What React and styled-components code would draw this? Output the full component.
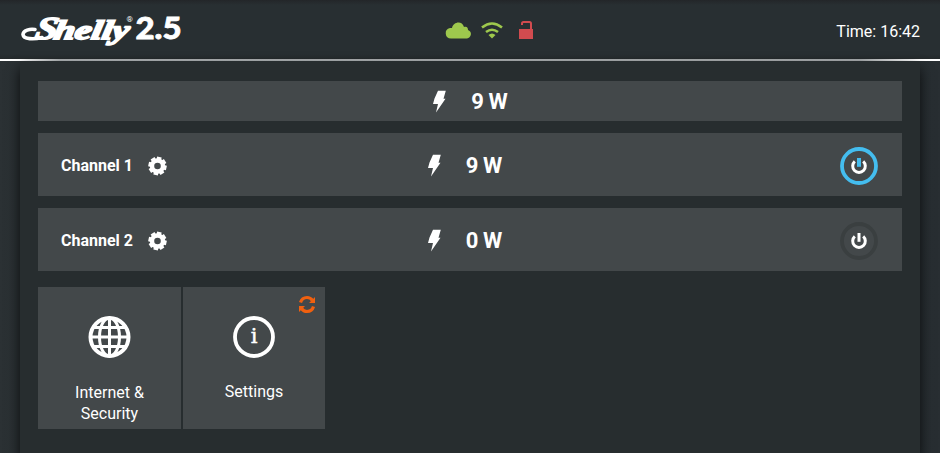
import React from "react";
import styled, { createGlobalStyle } from "styled-components";

const Global = createGlobalStyle`
  * { box-sizing: border-box; }
  body { margin: 0; background: #282e31; color: #fff; font: 16px/21px Roboto, sans-serif; overflow: hidden; }
`;
const Page = styled.div`
  height: 453px;
  overflow: hidden;
  background: linear-gradient(90deg, #2b3134, #262d30 8%, #262d30 92%, #282e32);
`;
const Header = styled.header`
  height: 59px;
  display: grid;
  grid-template-columns: 425px 90px 1fr;
  align-items: center;
  padding: 0 20px;
  background: linear-gradient(#232629, #282f32 5px, #282f32 54px, #24292b);
`;
const Logo = styled.svg`
  display: block;
  width: 170px;
  height: 59px;
`;
const StatusIcons = styled.div`
  display: flex;
  align-items: center;
  height: 59px;
  svg { display: block; flex: none; }
`;
const Clock = styled.div`
  text-align: right;
  padding-top: 4px;
`;
const Rule = styled.div`
  height: 2px;
  background: linear-gradient(90deg, #fff 0, #fff 20px, #aaaeb0 60px, #a4a8aa 860px, #fff 920px);
`;
const Panel = styled.main`
  margin: 0 20px;
  height: 392px;
  padding: 20px 18px;
  background: #272d2f;
  box-shadow: 0 8px 12px rgba(0, 0, 0, 0.75);
`;
const Row = styled.section`
  display: grid;
  grid-template-columns: 1fr auto 1fr;
  align-items: center;
  height: ${(p) => p.$height}px;
  margin-bottom: 12px;
  padding: 0 24px 0 23px;
  background: #43484a;
`;
const Name = styled.div`
  display: flex;
  align-items: center;
  gap: 15px;
  font-weight: 700;
  padding-top: 2px;
`;
const Power = styled.div`
  display: flex;
  align-items: center;
  gap: 25px;
  padding-right: ${(p) => p.$shift * 2}px;
  padding-top: ${(p) => (p.$shift ? 2 : 0)}px;
  font-size: 22px;
  font-weight: 700;
  word-spacing: -1px;
  svg { display: block; }
`;
const Toggle = styled.button`
  justify-self: end;
  width: 38px;
  height: 38px;
  margin-top: 3px;
  padding: 0;
  border: 0;
  background: none;
  svg { display: block; }
`;
const Tiles = styled.div`
  display: flex;
  gap: 2px;
  margin-top: 16px;
`;
const Tile = styled.section`
  position: relative;
  display: flex;
  flex-direction: column;
  align-items: center;
  width: ${(p) => p.$width}px;
  height: 142px;
  padding-top: 28px;
  background: #43484a;
  text-align: center;
`;
const TileLabel = styled.div`
  width: 100px;
  margin-top: ${(p) => p.$gap}px;
`;
const Badge = styled.svg`
  position: absolute;
  top: 8px;
  right: 9px;
`;

const Bolt = () => (
  <svg width="15" height="23" viewBox="0 0 15 23" fill="#fff">
    <path d="M7 .8H14.800L12.500 8.800h2L5 22.500 7 14H2L3.500 8.500z" />
  </svg>
);
const teeth = [0, 45, 90, 135, 180, 225, 270, 315];
const Gear = () => (
  <svg width="20" height="20" viewBox="0.500 0 20 20">
    <circle cx="10" cy="10" r="5.500" fill="none" stroke="#fff" strokeWidth="4.400" />
    {teeth.map((a) => (
      <rect key={a} x="7.700" y=".9" width="4.600" height="4" fill="#fff" transform={`rotate(${a + 12} 10 10)`} />
    ))}
  </svg>
);
const PowerButton = ({ on }) => (
  <Toggle aria-label="Power">
    <svg width="38" height="38" viewBox="0 0 38 38" fill="none">
      <circle cx="19" cy="19" r="17" stroke={on ? "#44bdef" : "#3a3f40"} strokeWidth="3.8" />
      <path d="M14.800 14.400a6.300 6.300 0 1 0 8.400 0" stroke="#fff" strokeWidth="3" />
      <path d="M19 11v8.800" stroke={on ? "#44bdef" : "#fff"} strokeWidth={on ? 4 : 3} />
    </svg>
  </Toggle>
);
const Reading = ({ value, shift = 0 }) => (
  <Power $shift={shift}><Bolt /><span>{value} W</span></Power>
);
const Channel = ({ name, value, on }) => (
  <Row $height={63}>
    <Name>{name}<Gear /></Name>
    <Reading value={value} shift={5.5} />
    <PowerButton on={on} />
  </Row>
);

export default function App() {
  return (
    <Page>
      <Global />
      <Header>
        <Logo viewBox="20 0 170 59" fill="#fff">
          <g fontFamily="Liberation Serif, serif" fontStyle="italic" fontWeight="700" stroke="#fff">
            <text transform="translate(34 38.500) skewX(-12)" fontSize="32" strokeWidth="1.600" textLength="22" lengthAdjust="spacingAndGlyphs">S</text>
            <text transform="translate(53 39) skewX(-10)" fontSize="27" strokeWidth="1.800" textLength="75" lengthAdjust="spacingAndGlyphs">helly</text>
          </g>
          <path d="M42 37.500C34 39.500 23.500 39.500 23 34.500C23 30.500 30 28.500 35 29.500" fill="none" stroke="#fff" strokeWidth="3.600" strokeLinecap="round" />
          <text x="126.500" y="22" fontFamily="Roboto, sans-serif" fontSize="8">®</text>
          <text x="135.500" y="39" fontFamily="Lato, sans-serif" fontWeight="900" fontSize="31" stroke="#fff" strokeWidth=".8" textLength="46" lengthAdjust="spacingAndGlyphs">2.5</text>
        </Logo>
        <StatusIcons>
          <svg width="90" height="24" viewBox="445 18 90 24">
            <path d="M451 38.500a5.300 5.300 0 0 1-1-10.500h2c1-6 10-8 12-1 3-1 4 1 4 3 5 2 3 8-1 8.500z" fill="#9ec84d" />
            <path d="M482 27.500q10-8 20 0M486 32q6-4.500 12 0" fill="none" stroke="#9ec84d" strokeWidth="2.600" />
            <path d="M488.500 35q3.500-3 7 0L492 38.500z" fill="#9ec84d" />
            <path d="M519 29h14v10h-14z" fill="#d14b4f" />
            <path d="M522 25v-1.500q0-1.500 1.500-1.500h6q1.500 0 1.500 1.500V30" fill="none" stroke="#d14b4f" strokeWidth="2" />
          </svg>
        </StatusIcons>
        <Clock>Time: 16:42</Clock>
      </Header>
      <Rule />
      <Panel>
        <Row $height={40}><span /><Reading value="9" /><span /></Row>
        <Channel name="Channel 1" value="9" on />
        <Channel name="Channel 2" value="0" />
        <Tiles>
          <Tile $width={143}>
            <svg width="44" height="44" viewBox="0.5 0 44 44" fill="none" stroke="#fff" strokeWidth="3">
              <circle cx="22" cy="22" r="19" strokeWidth="4" />
              <ellipse cx="22" cy="22" rx="10" ry="19" />
              <path d="M22 3v38M3 22h38M6.500 12.500h31M6.500 31.500h31" />
            </svg>
            <TileLabel $gap={23}>Internet &amp; Security</TileLabel>
          </Tile>
          <Tile $width={142}>
            <svg width="44" height="44" viewBox="0 0 44 44">
              <circle cx="22" cy="22" r="19" fill="none" stroke="#fff" strokeWidth="3.800" />
              <text x="22" y="28" fill="#fff" stroke="#fff" strokeWidth=".5" textAnchor="middle" fontFamily="DejaVu Serif, serif" fontSize="21">i</text>
            </svg>
            <TileLabel $gap={22}>Settings</TileLabel>
            <Badge width="18" height="19" viewBox="0 0 18 19">
              <path d="M2.500 7.500Q4 2.500 9 2.500q3.500 0 5.500 3M15.500 11.500Q14 16.500 9 16.500q-3.500 0-5.500-3" fill="none" stroke="#f0600f" strokeWidth="3.200" />
              <path d="M17 2v6h-6zM1 17v-6h6z" fill="#f0600f" />
            </Badge>
          </Tile>
        </Tiles>
      </Panel>
    </Page>
  );
}
